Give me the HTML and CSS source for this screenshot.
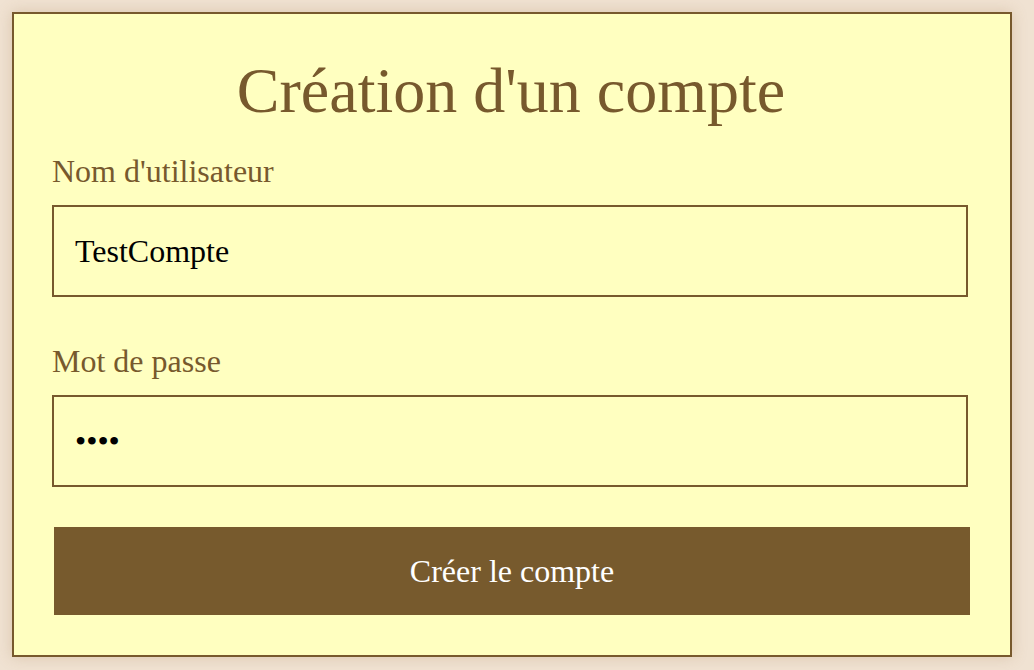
FILE: index.html
```html
<!DOCTYPE html>
<html lang="fr">
<head>
<meta charset="utf-8">
<title>Création d'un compte</title>
<link rel="stylesheet" href="styles.css">
</head>
<body>
<form class="card">
  <h1 class="title">Création d'un compte</h1>
  <label class="label" for="user">Nom d'utilisateur</label>
  <input class="field" id="user" type="text" value="TestCompte">
  <label class="label label-pass" for="pass">Mot de passe</label>
  <input class="field" id="pass" type="password" value="test">
  <button class="submit" type="button">Créer le compte</button>
</form>
</body>
</html>
```

FILE: styles.css
```css
html, body {
  margin: 0;
  padding: 0;
}
body {
  background: #f0e2d2;
  font-family: "Liberation Serif", "Times New Roman", serif;
  padding: 12px 0 0 12px;
  height: 670px;
  box-sizing: border-box;
}
.card {
  width: 1000px;
  height: 645px;
  box-sizing: border-box;
  border: 2px solid #77592d;
  background: #ffffc0;
  box-shadow: 0 0 14px rgba(150, 110, 60, 0.25);
  padding: 0 40px 0 38px;
  display: flex;
  flex-direction: column;
  align-items: flex-start;
}
.title {
  align-self: stretch;
  margin: 45px 0 0;
  font-weight: normal;
  font-size: 64px;
  line-height: 64px;
  color: #77592d;
  text-align: center;
}
.label {
  margin-top: 30px;
  font-size: 32px;
  line-height: 36px;
  color: #77592d;
}
.label-pass {
  margin-top: 46px;
}
.field {
  margin: 16px 0 0;
  width: 916px;
  height: 92px;
  box-sizing: border-box;
  border: 2px solid #77592d;
  background: #ffffc0;
  padding: 0 21px;
  font-family: "Liberation Serif", "Times New Roman", serif;
  font-size: 32px;
  color: #000;
  outline: none;
}
.submit {
  margin: 40px 0 0 2px;
  width: 916px;
  height: 88px;
  padding: 0;
  border: none;
  background: #775a2d;
  color: #fff;
  font-family: "Liberation Serif", "Times New Roman", serif;
  font-size: 32px;
  cursor: pointer;
}
```
